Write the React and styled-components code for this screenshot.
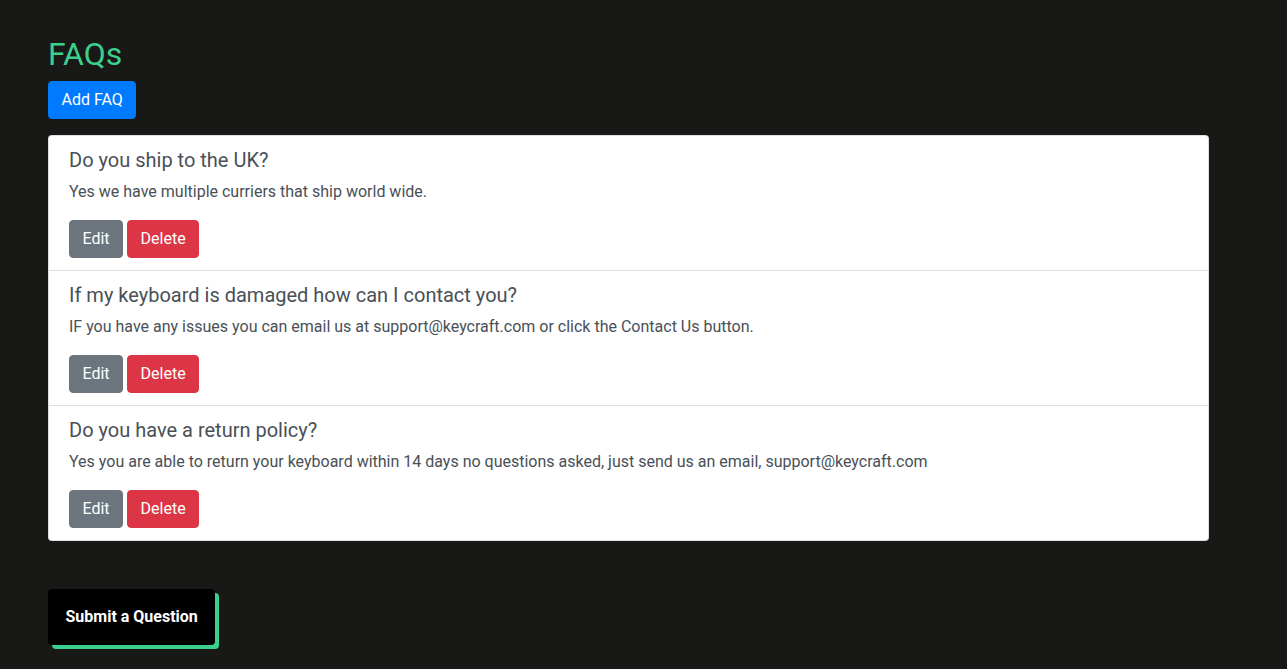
import React from "react";
import styled, { createGlobalStyle } from "styled-components";

const GlobalStyle = createGlobalStyle`
  body {
    margin: 0;
    background-color: #181817;
    font-family: Roboto, "Liberation Sans", sans-serif;
    font-size: 16px;
    line-height: 1.5;
    color: #495057;
  }
  * { box-sizing: border-box; }
`;

const Page = styled.div`
  padding: 35px 48px 40px;
  width: 1257px;
`;

const Title = styled.h2`
  margin: 0 0 8px;
  font-size: 32px;
  font-weight: 400;
  line-height: 1.2;
  color: #3ccf8e;
`;

const Btn = styled.button`
  display: inline-block;
  font-family: inherit;
  font-size: 16px;
  font-weight: 400;
  line-height: 1.5;
  padding: 6px 12.5px;
  border: 1px solid ${(p) => p.$bg};
  border-radius: 4px;
  background-color: ${(p) => p.$bg};
  color: #fff;
  cursor: pointer;
`;

const List = styled.ul`
  list-style: none;
  margin: 16px 0 0;
  padding: 0;
  background: #fff;
  border-radius: 4px;
  border: 1px solid rgba(0, 0, 0, 0.125);
  overflow: hidden;
`;

const Item = styled.li`
  padding: 12px 20px;
  & + & {
    border-top: 1px solid #dfdfdf;
  }
`;

const Question = styled.h5`
  margin: 0 0 8px;
  font-size: 20px;
  font-weight: 400;
  line-height: 1.2;
  color: #495057;
`;

const Answer = styled.p`
  margin: 0 0 16px;
  font-size: 16px;
  color: #495057;
`;

const Actions = styled.div`
  display: flex;
  gap: 4px;
`;

const SubmitWrap = styled.div`
  margin-top: 48px;
`;

const Submit = styled.button`
  font-family: inherit;
  font-size: 16px;
  font-weight: 700;
  line-height: 24px;
  padding: 16px 17.5px;
  background: #000;
  color: #fff;
  border: none;
  border-radius: 4px;
  box-shadow: 4px 4px 0 #3ccf8e;
  cursor: pointer;
`;

const faqs = [
  {
    q: "Do you ship to the UK?",
    a: "Yes we have multiple curriers that ship world wide.",
  },
  {
    q: "If my keyboard is damaged how can I contact you?",
    a: "IF you have any issues you can email us at support@keycraft.com or click the Contact Us button.",
  },
  {
    q: "Do you have a return policy?",
    a: "Yes you are able to return your keyboard within 14 days no questions asked, just send us an email, support@keycraft.com",
  },
];

const App = () => {
  return (
    <>
      <GlobalStyle />
      <Page>
        <Title>FAQs</Title>
        <Btn $bg="#007bff">Add FAQ</Btn>
        <List>
          {faqs.map((f) => (
            <Item key={f.q}>
              <Question>{f.q}</Question>
              <Answer>{f.a}</Answer>
              <Actions>
                <Btn $bg="#6c757d">Edit</Btn>
                <Btn $bg="#dc3545">Delete</Btn>
              </Actions>
            </Item>
          ))}
        </List>
        <SubmitWrap>
          <Submit>Submit a Question</Submit>
        </SubmitWrap>
      </Page>
    </>
  );
};

export default App;
